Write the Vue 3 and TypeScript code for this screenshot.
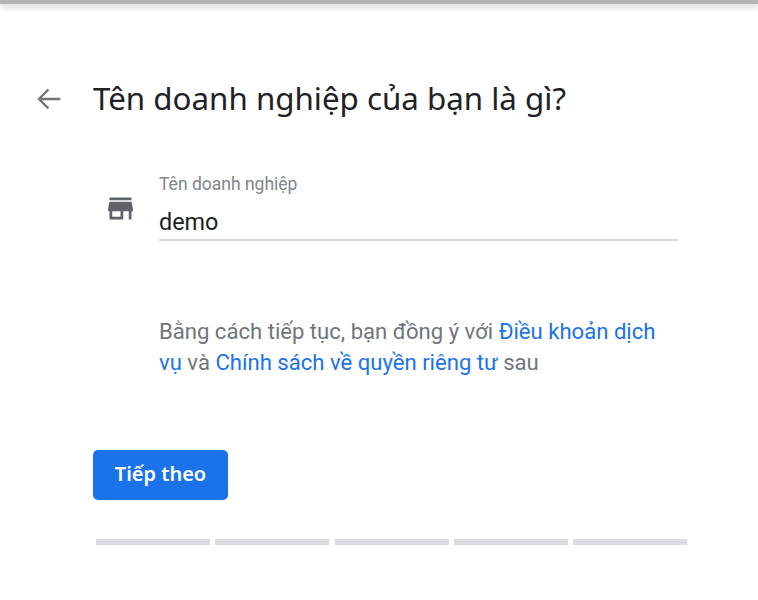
<script setup lang="ts">
const segments: number[] = [1, 2, 3, 4, 5]
</script>

<template>
  <div class="page">
    <div class="topbar"></div>
    <header class="head">
      <svg class="back" width="24" height="24" viewBox="0 0 24 24" aria-hidden="true">
        <path d="M20.5 12H4.5M11.5 5l-7 7 7 7" />
      </svg>
      <h1 class="title">Tên doanh nghiệp của bạn là gì?</h1>
    </header>
    <section class="field">
      <svg class="store" width="33" height="33" viewBox="0 0 24 24" aria-hidden="true">
        <path d="M20 4H4v2h16V4zm1 10v-2l-1-5H4l-1 5v2h1v6h10v-6h4v6h2v-6h1zm-9 4H6v-4h6v4z" />
      </svg>
      <div class="control">
        <label class="label">Tên doanh nghiệp</label>
        <div class="value">demo</div>
      </div>
    </section>
    <p class="terms">
      Bằng cách tiếp tục, bạn đồng ý với <a class="link">Điều khoản dịch vụ</a> và
      <a class="link">Chính sách về quyền riêng tư</a> sau
    </p>
    <button class="next" type="button">Tiếp theo</button>
    <div class="progress">
      <span v-for="s in segments" :key="s" class="seg"></span>
    </div>
  </div>
</template>

<style>
html, body { background: #fff; }
</style>

<style scoped>
.page {
  width: 758px;
  height: 600px;
  overflow: hidden;
  background: #fff;
  font-family: Roboto, "Liberation Sans", sans-serif;
  display: flex;
  flex-direction: column;
}
.topbar {
  height: 4px;
  flex: none;
  background: #b4b4b4;
  box-shadow: 0 3px 6px rgba(0, 0, 0, 0.2);
}
.head {
  display: flex;
  align-items: center;
  margin-top: 72px;
  padding-left: 33px;
  gap: 28px;
  height: 44px;
}
.back {
  flex: none;
  width: 32px;
  height: 32px;
  margin-top: 2px;
  fill: none;
  stroke: #70757a;
  stroke-width: 1.7;
}
.title {
  margin: 0;
  font-family: "Noto Sans", sans-serif;
  font-weight: 400;
  font-size: 31.3px;
  line-height: 44px;
  color: #202124;
  white-space: nowrap;
}
.field {
  display: flex;
  margin-top: 54px;
  padding-left: 104px;
  gap: 22px;
}
.store { fill: #5f6368; flex: none; margin-top: 18px; }
.control {
  width: 519px;
  border-bottom: 2px solid #dadce0;
  height: 67px;
  box-sizing: border-box;
}
.label { display: block; font-size: 17.5px; line-height: 20px; color: #80868b; }
.value { font-size: 23.4px; line-height: 34px; margin-top: 11px; color: #202124; }
.terms {
  margin: 75px 0 0 159px;
  width: 510px;
  font-size: 22.1px;
  line-height: 31px;
  color: #70757a;
}
.link { color: #1a73e8; }
.next {
  align-self: flex-start;
  margin: 72px 0 0 93px;
  width: 135px;
  height: 50px;
  border: 0;
  border-radius: 5px;
  background: #1a73e8;
  color: #fff;
  font-family: "Noto Sans", sans-serif;
  font-weight: 600;
  font-size: 20px;
  padding: 0 0 3px;
}
.progress {
  display: flex;
  gap: 5.25px;
  margin: 39px 0 0 96px;
  width: 591px;
}
.seg { flex: 1; height: 6px; background: #dadce0; }
</style>
